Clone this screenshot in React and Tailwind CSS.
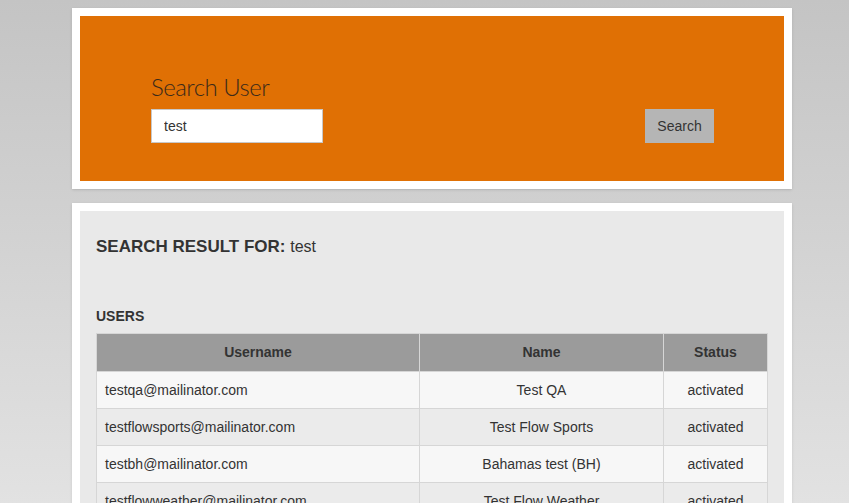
import React from "react";

const users = [
  { username: "testqa@mailinator.com", name: "Test QA", status: "activated" },
  { username: "testflowsports@mailinator.com", name: "Test Flow Sports", status: "activated" },
  { username: "testbh@mailinator.com", name: "Bahamas test (BH)", status: "activated" },
  { username: "testflowweather@mailinator.com", name: "Test Flow Weather", status: "activated" },
  { username: "testflowtravel@mailinator.com", name: "Test Flow Travel", status: "activated" },
];

function App() {
  return (
    <div
      className="h-[503px] overflow-hidden bg-gradient-to-b from-[#c4c4c4] to-[#e2e2e2] pt-2 text-[#333]"
      style={{ fontFamily: '"Liberation Sans", Arial, sans-serif' }}
    >
      <div className="w-[720px] ml-[72px] flex flex-col gap-[14px]">
        {/* search panel */}
        <section className="bg-white p-2 shadow-sm">
          <div className="bg-[#e07004] h-[165px] pl-[71px] pr-[70px] pt-[49px]">
            <h1
              className="text-[24px] leading-[44px] text-[#3b2a1a] tracking-[-0.5px]"
              style={{ fontFamily: 'Lato, "Liberation Sans", sans-serif', fontWeight: 300 }}
            >
              Search User
            </h1>
            <div className="flex items-center justify-between">
              <input
                defaultValue="test"
                className="w-[172px] h-[34px] bg-white border border-[#c8c8c8] px-3 text-[14px] text-[#333] outline-none"
              />
              <button className="w-[69px] h-[34px] bg-[#b5b5b5] text-[14px] text-[#333]">
                Search
              </button>
            </div>
          </div>
        </section>

        {/* results panel */}
        <section className="bg-white p-2 shadow-sm">
          <div className="bg-[#e9e9e9] px-4 pt-[24px] pb-6">
            <h2 className="text-[17px] font-bold leading-[24px]">
              SEARCH RESULT FOR: <span className="font-normal text-[16px]">test</span>
            </h2>
            <h3 className="mt-[48px] text-[14px] font-semibold leading-[18px] mb-[8px]">USERS</h3>
            <table className="w-[672px] border-collapse text-[14px]">
              <thead>
                <tr className="bg-[#9b9b9b] h-[38px]">
                  <th className="w-[323px] border border-[#d6d6d6] font-bold">Username</th>
                  <th className="w-[244px] border border-[#d6d6d6] font-bold">Name</th>
                  <th className="border border-[#d6d6d6] font-bold">Status</th>
                </tr>
              </thead>
              <tbody>
                {users.map((u, i) => (
                  <tr key={u.username} className={`h-[37px] ${i % 2 === 0 ? "bg-[#f7f7f7]" : "bg-[#ebebeb]"}`}>
                    <td className="border border-[#d6d6d6] pl-[8px]">{u.username}</td>
                    <td className="border border-[#d6d6d6] text-center">{u.name}</td>
                    <td className="border border-[#d6d6d6] text-center">{u.status}</td>
                  </tr>
                ))}
              </tbody>
            </table>
          </div>
        </section>
      </div>
    </div>
  );
}

export default App;
